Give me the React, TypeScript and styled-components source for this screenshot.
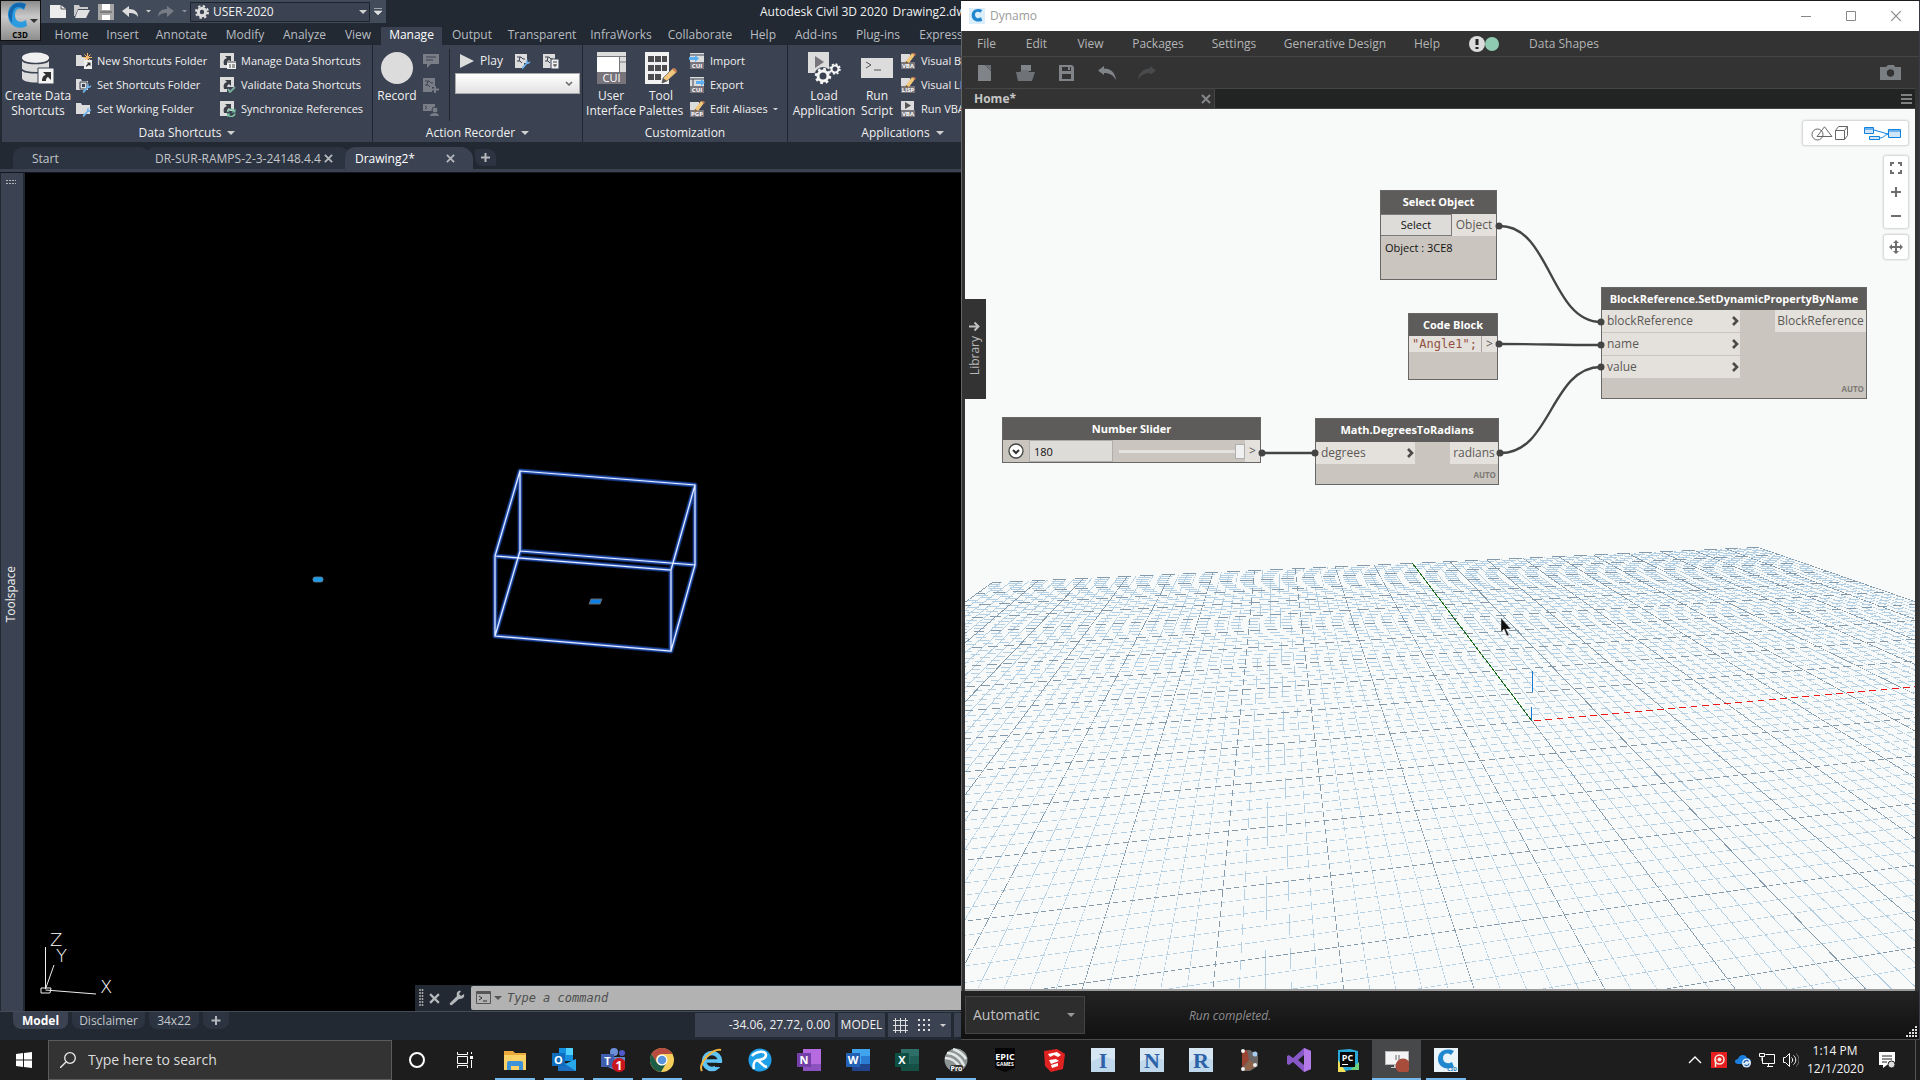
import React from 'react';
import styled, { createGlobalStyle, css } from 'styled-components';

const ui = '"Open Sans", "Noto Sans", sans-serif';
const mono = '"DejaVu Sans Mono", "Liberation Mono", monospace';
const c = {
  dark: '#222933',
  panel: '#3b4252',
  text: '#f0f0f0',
  dim: '#c3c6ca',
  icon: '#dcdcdc',
  dyn: '#333333',
  canvas: '#f8faf9',
};

const GlobalStyle = createGlobalStyle`
  * { box-sizing: border-box; }
  body { margin: 0; background: #1c1c1c; font-family: ${ui}; font-size: 12px; line-height: 16px; }
  button, input, select { font: inherit; color: inherit; margin: 0; padding: 0; border: 0; background: none; border-radius: 0; }
  svg { display: block; flex: none; }
`;

/* ---------- shell ---------- */
const Desktop = styled.div`
  min-height: 100vh;
  display: flex;
  flex-direction: column;
`;
const Windows = styled.main`
  flex: 1;
  display: grid;
  grid-template-columns: minmax(0, 961fr) minmax(0, 959fr);
`;

/* ---------- Civil 3D ---------- */
const Cad = styled.section`
  display: flex;
  flex-direction: column;
  overflow: hidden;
  background: ${c.dark};
  color: ${c.text};
  white-space: nowrap;
`;
const CadHeader = styled.header`
  display: flex;
  height: 45px;
`;
const AppButton = styled.button`
  flex: none;
  width: 41px;
  height: 41px;
  border: 1px solid #111;
  background: linear-gradient(#8b8b8b, #c9c9c9 40%, #8d8d8d);
`;
const HeaderRows = styled.div`
  flex: 1;
  min-width: 0;
  display: flex;
  flex-direction: column;
  justify-content: space-between;
`;
const TitleRow = styled.div`
  display: flex;
  align-items: flex-start;
`;
const QuickAccess = styled.div`
  display: flex;
  align-items: center;
  flex: none;
  width: 345px;
  height: 23px;
  padding-left: 9px;
  background: #414b5a;
`;
const QuickButton = styled.button<{ $w: number }>`
  display: flex;
  flex: none;
  align-items: center;
  width: ${(p) => p.$w}px;
  height: 20px;
`;
const WorkspacePicker = styled.label`
  display: flex;
  align-items: center;
  gap: 4px;
  width: 180px;
  height: 20px;
  padding: 0 2px 0 4px;
  border: 1px solid #1d232c;
  background: ${c.panel};
  select { flex: 1; appearance: none; outline: 0; }
`;
const WindowTitle = styled.h1`
  display: flex;
  gap: 5px;
  margin: 4px 0 0 374px;
  font-size: 12px;
  font-weight: 400;
  line-height: 16px;
`;
const RibbonTabs = styled.nav`
  display: flex;
  padding-left: 4px;
`;
const RibbonTab = styled.button<{ $w: number; $active?: boolean }>`
  flex: none;
  width: ${(p) => p.$w}px;
  height: 18px;
  padding-bottom: 2px;
  line-height: 16px;
  color: ${(p) => (p.$active ? '#fff' : '#b9bdc1')};
  background: ${(p) => (p.$active ? c.panel : 'none')};
`;
const Ribbon = styled.div`
  display: flex;
  height: 97px;
  margin-left: 2px;
  background: ${c.panel};
`;
const Panel = styled.section<{ $w: number }>`
  flex: none;
  width: ${(p) => p.$w}px;
  display: flex;
  flex-direction: column;
  justify-content: space-between;
  padding-bottom: 1px;
  border-right: 1px solid #202631;
`;
const PanelBody = styled.div<{ $pad?: number }>`
  display: flex;
  padding-left: ${(p) => p.$pad ?? 0}px;
`;
const PanelTitle = styled.h2`
  display: flex;
  align-items: center;
  justify-content: center;
  gap: 6px;
  margin: 0;
  font-size: 12px;
  font-weight: 400;
  line-height: 16px;
`;
const BigButton = styled.button<{ $w: number }>`
  flex: none;
  display: flex;
  flex-direction: column;
  align-items: center;
  gap: 3px;
  width: ${(p) => p.$w}px;
  padding-top: 7px;
  line-height: 15px;
`;
const Stack = styled.div<{ $w?: number; $gap?: number }>`
  flex: none;
  display: flex;
  flex-direction: column;
  margin-left: ${(p) => p.$gap ?? 0}px;
  padding-top: 4px;
  width: ${(p) => (p.$w ? `${p.$w}px` : 'auto')};
  font-size: 11px;
`;
const RowButton = styled.button`
  display: flex;
  align-items: center;
  gap: 5px;
  height: 24px;
`;
const RecorderTools = styled.div`
  display: flex;
  flex-direction: column;
  width: 132px;
  margin-top: 4px;
  padding-left: 5px;
  border-left: 1px solid #22262f;
`;
const RecorderRow = styled.div`
  display: flex;
  gap: 12px;
  height: 24px;
  padding-left: 4px;
`;
const MacroSelect = styled.label`
  display: flex;
  align-items: center;
  width: 125px;
  height: 21px;
  padding-right: 6px;
  border: 1px solid #a9a9a9;
  background: linear-gradient(#fff, #e2e2e2);
  select { flex: 1; min-width: 0; appearance: none; color: #333; outline: 0; }
`;
const DocTabs = styled.nav`
  display: flex;
  align-items: flex-end;
  height: 27px;
  padding-left: 13px;
`;
const DocTab = styled.div<{ $w: number; $pad: number; $active?: boolean }>`
  display: flex;
  align-items: center;
  justify-content: space-between;
  flex: none;
  width: ${(p) => p.$w}px;
  height: 22px;
  padding: 1px 18px 0 ${(p) => p.$pad}px;
  margin-right: -6px;
  border-radius: 10px 12px 0 0;
  color: ${(p) => (p.$active ? '#fff' : c.dim)};
  background: ${(p) => (p.$active ? c.panel : '#2c3441')};
  position: relative;
  z-index: ${(p) => (p.$active ? 1 : 0)};
`;
const NewTab = styled.button`
  display: grid;
  place-items: center;
  width: 21px;
  height: 17px;
  margin: 0 0 3px 8px;
  border-radius: 2px 8px 2px 8px;
  background: #2c3441;
`;
const Strip = styled.div`
  height: 4px;
  background: ${c.panel};
  border-bottom: 1px solid #14181e;
`;
const Workspace = styled.div`
  flex: 1;
  display: flex;
`;
const Palette = styled.aside`
  flex: none;
  display: flex;
  flex-direction: column;
  align-items: center;
  justify-content: space-between;
  width: 25px;
  padding: 6px 2px 8px 0;
  border-left: 1px solid ${c.dark};
  border-right: 2px solid ${c.dark};
  background: ${c.panel};
`;
const SideLabel = styled.span`
  writing-mode: vertical-rl;
  transform: rotate(180deg);
  line-height: 16px;
`;
const PaletteLabel = styled(SideLabel)`
  margin: auto 0;
`;
const ModelSpace = styled.div`
  position: relative;
  flex: 1;
  min-width: 0;
  display: flex;
  flex-direction: column;
  justify-content: flex-end;
  background: #000;
`;
const Drawing = styled.svg`
  position: absolute;
  inset: 0;
  width: 100%;
  height: 100%;
`;
const Ucs = styled.svg`
  position: absolute;
  left: 14px;
  bottom: 10px;
`;
const CommandLine = styled.form`
  position: relative;
  display: flex;
  align-items: stretch;
  height: 26px;
  margin-left: 390px;
  background: ${c.dark};
`;
const CommandTools = styled.div`
  flex: none;
  display: flex;
  align-items: center;
  gap: 4px;
  width: 56px;
  padding-left: 4px;
`;
const WrenchSlot = styled.span`
  margin-left: 5px;
`;
const CommandField = styled.label`
  flex: 1;
  display: flex;
  align-items: center;
  gap: 5px;
  margin: 1px 0;
  padding-left: 5px;
  border-radius: 2px 0 0 2px;
  background: #b1b2b1;
  input { flex: 1; min-width: 0; outline: 0; font: italic 12px/16px ${mono}; }
  input::placeholder { color: #4e4f4f; opacity: 1; }
`;
const CadFooter = styled.footer`
  display: flex;
  align-items: flex-start;
  height: 29px;
  border-top: 1px solid #454b57;
`;
const LayoutTabs = styled.nav`
  display: flex;
  flex: 1;
  padding-left: 13px;
`;
const LayoutTab = styled.button<{ $w: number; $active?: boolean }>`
  flex: none;
  width: ${(p) => p.$w}px;
  height: 17px;
  line-height: 16px;
  border-radius: 0 0 8px 8px;
  margin-right: 4px;
  font-weight: ${(p) => (p.$active ? 700 : 400)};
  color: ${(p) => (p.$active ? '#fff' : c.dim)};
  background: ${(p) => (p.$active ? c.panel : '#2c3441')};
`;
const StatusTools = styled.div`
  display: flex;
  gap: 3px;
  padding-top: 1px;
`;
const StatusBox = styled.button<{ $w: number; $end?: boolean }>`
  display: flex;
  align-items: center;
  justify-content: ${(p) => (p.$end ? 'flex-end' : 'center')};
  gap: 9px;
  flex: none;
  width: ${(p) => p.$w}px;
  height: 24px;
  padding-right: ${(p) => (p.$end ? 5 : 0)}px;
  background: ${c.panel};
`;

/* ---------- Dynamo ---------- */
const Dyn = styled.section`
  position: relative;
  display: flex;
  flex-direction: column;
  margin-top: 1px;
  border-right: 1px solid #3a3c44;
  background: ${c.dyn};
  box-shadow: inset 1px 0 #666;
  color: #b4b5b6;
  white-space: nowrap;
`;
const DynTitle = styled.header`
  display: flex;
  align-items: center;
  height: 30px;
  padding: 0 3px 0 8px;
  gap: 5px;
  background: #fff;
  color: #9b9b9b;
  h1 { flex: 1; margin: 0; font-size: 12px; font-weight: 400; line-height: 16px; }
`;
const WindowButton = styled.button`
  display: grid;
  place-items: center;
  width: 40px;
  height: 28px;
`;
const DynMenu = styled.nav`
  display: flex;
  align-items: center;
  height: 26px;
  padding-left: 1px;
  border-bottom: 1px solid #454545;
`;
const MenuItem = styled.button<{ $w: number }>`
  flex: none;
  width: ${(p) => p.$w}px;
  height: 24px;
`;
const Notice = styled.button`
  display: flex;
  flex: none;
  width: 60px;
  justify-content: center;
`;
const DynTools = styled.div`
  display: flex;
  align-items: center;
  height: 31px;
  padding: 0 18px 0 16px;
`;
const ToolButton = styled.button<{ $w: number }>`
  display: flex;
  width: ${(p) => p.$w}px;
`;
const Spacer = styled.div`
  flex: 1;
`;
const DynTabs = styled.nav`
  display: flex;
  height: 21px;
  margin: 0 4px;
  border-top: 1px solid #454545;
  border-bottom: 1px solid #454545;
  background: #222424;
`;
const DynTab = styled.div`
  display: flex;
  align-items: center;
  justify-content: space-between;
  width: 250px;
  padding: 0 3px 0 9px;
  border-right: 1px solid #454545;
  background: ${c.dyn};
  color: #c6c6c6;
  font-weight: 700;
`;
const MenuButton = styled.button`
  display: grid;
  place-items: center;
  width: 17px;
  margin-left: auto;
`;
const Graph = styled.div`
  position: relative;
  flex: 1;
  margin: 0 4px;
  background: ${c.canvas};
  border-bottom: 2px solid #9a9a9a;
  overflow: hidden;
`;
const GraphLayer = styled.svg`
  position: absolute;
  inset: 0;
  width: 100%;
  height: 100%;
`;
const LibraryTab = styled.button`
  position: absolute;
  left: 0;
  top: 190px;
  display: flex;
  flex-direction: column;
  align-items: center;
  gap: 4px;
  width: 21px;
  height: 100px;
  padding-top: 22px;
  padding-right: 2px;
  background: ${c.dyn};
  color: #b8b8b8;
`;
const ViewTools = styled.div`
  position: absolute;
  top: 12px;
  right: 7px;
  display: flex;
  flex-direction: column;
  align-items: flex-end;
`;
const ToolCard = styled.div<{ $row?: boolean; $gap: number }>`
  display: flex;
  flex-direction: ${(p) => (p.$row ? 'row' : 'column')};
  margin-bottom: ${(p) => p.$gap}px;
  border-radius: 2px;
  background: #fff;
  box-shadow: 0 0 2px 1px #cfd0d0;
`;
const ViewButton = styled.button<{ $w: number }>`
  display: grid;
  place-items: center;
  width: ${(p) => p.$w}px;
  height: 24px;
  & + & { box-shadow: ${(p) => (p.$w > 30 ? '-1px 0 0 #d4d5d5' : 'none')}; }
`;
const Node = styled.article<{ $x: number; $y: number; $w: number; $h: number }>`
  position: absolute;
  left: ${(p) => p.$x}px;
  top: ${(p) => p.$y}px;
  width: ${(p) => p.$w}px;
  height: ${(p) => p.$h}px;
  display: flex;
  flex-direction: column;
  border: 1px solid #696766;
  background: #cac5be;
  color: #5b5957;
`;
const NodeTitle = styled.h2<{ $h?: number }>`
  margin: 0;
  height: ${(p) => p.$h ?? 22}px;
  font-size: 11px;
  font-weight: 700;
  line-height: 22px;
  text-align: center;
  color: #fff;
  background: #5e5c5a;
`;
const NodeBody = styled.div`
  display: flex;
  justify-content: space-between;
  align-items: flex-start;
`;
const portBase = css`
  display: flex;
  align-items: center;
  justify-content: space-between;
  height: 22px;
  background: #e4e1dc;
`;
const Inputs = styled.div<{ $w: number }>`
  display: grid;
  gap: 1px;
  width: ${(p) => p.$w}px;
`;
const InPort = styled.div`
  ${portBase}
  padding: 0 1px 0 5px;
`;
const OutPort = styled.div<{ $w: number }>`
  ${portBase}
  justify-content: center;
  width: ${(p) => p.$w}px;
`;
const Lacing = styled.span`
  margin: auto 2px 2px auto;
  font-size: 8px;
  font-weight: 700;
  line-height: 14px;
  color: #7d7a76;
`;
const SelectButton = styled.button`
  flex: 1;
  height: 22px;
  border: 1px solid #7b797c;
  border-left: 0;
  background: #dddcd9;
  color: #111;
  font-size: 11px;
`;
const Selected = styled.p`
  margin: 4px;
  font-size: 11px;
  color: #111;
`;
const CodeInput = styled.input`
  flex: 1;
  min-width: 0;
  height: 16px;
  padding-left: 3px;
  border-right: 1px solid #aaa7a3;
  background: #e4e1dc;
  color: #92503f;
  font: 12px/16px ${mono};
  outline: 0;
`;
const CodePort = styled(OutPort)`
  height: 16px;
`;
const Expander = styled.button`
  width: 26px;
  display: flex;
  justify-content: center;
  align-self: center;
`;
const ValueInput = styled.input`
  width: 84px;
  height: 22px;
  padding-left: 4px;
  border: 1px solid #b0adaa;
  background: #dddcd9;
  color: #111;
  font-size: 11px;
  outline: 0;
`;
const Range = styled.input`
  flex: 1;
  min-width: 0;
  height: 22px;
  margin-left: 6px;
  appearance: none;
  outline: 0;
  &::-webkit-slider-runnable-track { height: 3px; background: #e4e2df; border: 0; }
  &::-webkit-slider-thumb { appearance: none; width: 10px; height: 15px; margin-top: -6px; border: 1px solid #b0b0b0; background: #f0f0f0; }
`;
const Cursor = styled.svg`
  position: absolute;
  left: 536px;
  top: 509px;
`;
const RunBar = styled.footer`
  display: flex;
  align-items: center;
  height: 49px;
  padding-left: 4px;
  border-bottom: 1px solid #4a4a4a;
  background: linear-gradient(#232323, #111);
`;
const RunMode = styled.label`
  display: flex;
  align-items: center;
  width: 120px;
  height: 38px;
  padding: 0 9px 0 7px;
  border: 1px solid #444;
  background: #2d2d2d;
  select { flex: 1; min-width: 0; appearance: none; outline: 0; font-size: 14px; color: #c0c0c0; }
`;
const RunStatus = styled.output`
  flex: 1;
  margin-left: 104px;
  padding-top: 2px;
  font-style: italic;
  color: #8d8d90;
`;
const Resize = styled.svg`
  align-self: flex-end;
  margin: 0 2px 2px 0;
`;

/* ---------- taskbar ---------- */
const Taskbar = styled.footer`
  display: flex;
  height: 40px;
  background: #1d1d1d;
  color: #f4f4f4;
`;
const StartButton = styled.button`
  display: grid;
  place-items: center;
  width: 48px;
`;
const Search = styled.label`
  display: flex;
  align-items: center;
  gap: 12px;
  width: 344px;
  padding-left: 11px;
  border: 1px solid #5c5c5c;
  background: #333;
  input { flex: 1; outline: 0; font-size: 14px; line-height: 20px; }
  input::placeholder { color: #dcdcdc; opacity: 1; }
`;
const Task = styled.button<{ $open?: boolean; $active?: boolean }>`
  display: grid;
  place-items: center;
  width: 49px;
  background: ${(p) =>
    p.$active
      ? 'linear-gradient(#76b9ed, #76b9ed) bottom / 100% 2px no-repeat, #47484a'
      : p.$open
        ? 'linear-gradient(#76b9ed, #76b9ed) bottom / 40px 2px no-repeat'
        : 'none'};
`;
const Tray = styled.div`
  display: flex;
  align-items: center;
  gap: 8px;
  margin-left: auto;
  padding-right: 20px;
  margin-right: 4px;
  border-right: 1px solid #555;
`;
const TrayButton = styled.button`
  display: flex;
`;
const Clock = styled.time`
  width: 56px;
  margin-right: 8px;
  text-align: center;
  line-height: 18px;
`;

/* ---------- small drawings ---------- */
const Down = ({ w = 8, fill = '#d0d0d0' }: { w?: number; fill?: string }) => (
  <svg width={w} height={w / 2} viewBox="0 0 8 4"><path d="M0 0h8L4 4z" fill={fill} /></svg>
);
const Cross = ({ s = 9, stroke = '#b5b8bb', w = 2 }: { s?: number; stroke?: string; w?: number }) => (
  <svg width={s} height={s} viewBox="0 0 10 10"><path d="M1 1l8 8M9 1L1 9" stroke={stroke} strokeWidth={w} fill="none" /></svg>
);
const Plus = () => (
  <svg width="9" height="9"><path d="M4.500 0v9M0 4.500h9" stroke="#b5b8bb" strokeWidth="2" /></svg>
);
const Chevron = () => (
  <svg width="7" height="10" viewBox="0 0 7 10"><path d="M1 1l4 4-4 4" stroke="#4c4a48" strokeWidth="2.600" fill="none" /></svg>
);
const S16 = ({ children }: { children: React.ReactNode }) => (
  <svg width="16" height="16" viewBox="0 0 16 16" fontFamily="Open Sans" fontWeight="700">{children}</svg>
);
const Wrench = ({ fill = '#6fb2ea' }: { fill?: string }) => (
  <path d="M7 14l4-4c-.6-1.800.6-3.600 2.400-3.600l-1.200 1.700 1.200 1.100 1.900-1.200c.2 2-1.500 3.400-3.200 2.900L8.300 15.600c-1 .9-2.200-.6-1.300-1.600z" fill={fill} />
);
const Folder = () => <path d="M0 2h5l1 2h6v9H0z" fill={c.icon} />;
const Shortcut = () => (
  <>
    <path d="M0 0h14v10H7v5H0z" fill={c.icon} />
    <path d="M4 12c-1-4 0-6 3-7L5 3h6v6L9 7c-2 1-2 3-2 5z" fill="#3b3f46" />
  </>
);
const Pencil = () => (
  <>
    <path d="M6 8l6-8 3 2-6 8-4 1z" fill="#f3c77b" />
    <path d="M12 0l1-1 3 2-1 2z" fill="#b87446" />
    <path d="M6 8l3 2-4 1z" fill="#6d5a45" />
  </>
);
const Tag = ({ label, w = 14 }: { label: string; w?: number }) => (
  <>
    <rect x="1" y="9" width={w} height="7" fill="#77747b" />
    <text x={1 + w / 2} y="15" fontSize="6" textAnchor="middle" fill="#fff">{label}</text>
  </>
);
const Scroll = ({ fill = c.icon }: { fill?: string }) => (
  <>
    <path d="M0 1h12v9H9v5H0z" fill={fill} />
    <path d="M2 4h4l2 2h2M2 8h3l2 2M5 4L4 8" stroke="#3b4252" fill="none" />
  </>
);
const icons = {
  newFolder: <S16><Folder /><path d="M11.500 0v9M7 4.500h9M8.500 1.500l6 6M14.500 1.500l-6 6" stroke="#f7b765" /><path d="M8 7h8v9H8z" fill="#eee" /><path d="M10 14c0-2 1-3 2-3l-1-1.500h3.500V13L13 12z" fill="#333" /></S16>,
  setShort: <S16><Folder /><path d="M4 5h7v7H4z" fill="none" stroke="#3b4252" /><path d="M6 7h3v3H6z" fill="#3b4252" /><Wrench /></S16>,
  setWork: <S16><path d="M0 2h5l1 2h8v9H0z" fill={c.icon} /><Wrench /></S16>,
  manage: <S16><Shortcut /><path d="M7 8h9v8H7z" fill="#f3f3f3" /><path d="M7 8h9v2H7z" fill="#9a9a9a" /><path d="M9 12h2m1 0h3M9 14h2m1 0h3" stroke="#444" /></S16>,
  validate: <S16><Shortcut /><path d="M8 12l2 3 5-5" stroke="#7bab9a" strokeWidth="2" fill="none" /></S16>,
  sync: <S16><Shortcut /><path d="M7.500 11a4 4 0 017-1M15 12.500a4 4 0 01-7 1.500" stroke="#7bc1a2" strokeWidth="1.500" fill="none" /><path d="M15.500 7.500v4h-4zM7 16v-3.500h3.500z" fill="#7bc1a2" /></S16>,
  comment: <S16><path d="M0 1h16v10H8l-4 4v-4H0z" fill="#797d86" /><path d="M3 4h10M3 7h7" stroke="#3b4252" /></S16>,
  addStep: <S16><Scroll fill="#797d86" /><path d="M12 9v7M8 12.500h8" stroke="#797d86" strokeWidth="2" /></S16>,
  user: <S16><path d="M0 3h12v7H0z" fill="#797d86" /><path d="M2 5l2 1.500L2 8" stroke="#3b4252" fill="none" /><circle cx="12" cy="9" r="3" fill="#797d86" stroke="#3b4252" /><path d="M7 15c0-4 9-4 9 0z" fill="#797d86" /></S16>,
  macroEdit: <S16><Scroll /><Wrench /></S16>,
  macroPlay: <S16><Scroll /><path d="M8 6h8v10H8z" fill="#f0f0f0" stroke="#3b4252" /><path d="M10 9h4M10 12h4M12 11v3" stroke="#444" /></S16>,
  cuiImport: <S16><path d="M1 0h14v9H1z" fill={c.icon} /><path d="M1 2h14" stroke="#3b4252" /><path d="M0 4h6V2l4 3.500L6 9V7H0z" fill="#58aef0" /><Tag label="CUI" /></S16>,
  cuiExport: <S16><path d="M1 0h14v9H1z" fill={c.icon} /><path d="M1 2h14M4 2v7" stroke="#3b4252" /><path d="M7 4h5V2l4 3.500L12 9V7H7z" fill="#58aef0" /><Tag label="CUI" /></S16>,
  alias: <S16><path d="M1 1h9v8H1z" fill={c.icon} /><Tag label="PGP" /><Pencil /></S16>,
  vba: <S16><path d="M1 1h9v8H1z" fill={c.icon} /><Tag label="VBA" /><Pencil /></S16>,
  lisp: <S16><path d="M1 1h9v8H1z" fill={c.icon} /><Tag label="LISP" /><Pencil /></S16>,
  runVba: <S16><path d="M1 0h13v9H1z" fill={c.icon} /><path d="M5 1l6 3.500L5 8z" fill="#555" /><Tag label="VBA" /></S16>,
  play: <svg width="16" height="16"><path d="M1 1l14 7-14 7z" fill={c.icon} /></svg>,
};
const Gear = ({ x, y, r }: { x: number; y: number; r: number }) => (
  <g transform={`translate(${x} ${y})`}>
    <circle r={r} fill="none" stroke="#f4f4f4" strokeWidth={r * 0.6} />
    <circle r={r * 1.4} fill="none" stroke="#f4f4f4" strokeWidth={r * 0.5} strokeDasharray={`${r * 0.55} ${r * 0.55}`} />
  </g>
);
const DatabaseIcon = () => (
  <svg width="36" height="33" viewBox="0 0 36 33">
    <path d="M2 6v20c0 6 27 6 27 0V6z" fill={c.icon} />
    <path d="M2 7c0 6 27 6 27 0M2 17c0 5 27 5 27 0" stroke="#3b4252" strokeWidth="1.500" fill="none" />
    <ellipse cx="15.500" cy="5.500" rx="13.500" ry="5" fill="#f0f0f0" />
    <path d="M18 16h16v16H18z" fill="#f4f4f4" stroke="#3b4252" />
    <path d="M22 29c0-4 2-6 4-6l-3-3h8v8l-3-3c-2 1-2 2-2 4z" fill="#333" />
  </svg>
);
const CuiIcon = () => (
  <svg width="29" height="33" viewBox="0 0 29 33">
    <path d="M0 0h29v32H0z" fill={c.icon} /><path d="M0 4.500h29M22.500 5v15M23 10h6" stroke="#77747b" />
    <path d="M0 5h22v15H0z" fill="#fff" /><path d="M0 20h29v12H0z" fill="#77747b" />
    <text x="14.500" y="30" fontSize="11" textAnchor="middle" fill="#fff" fontFamily="Open Sans">CUI</text>
  </svg>
);
const PaletteIcon = () => (
  <svg width="34" height="33" viewBox="0 0 34 33">
    <path d="M1 0h24v32H1z" fill="#f2f2f2" />
    {[4, 13, 22].map((y) => [4, 11].map((x) => <rect key={`${x}-${y}`} x={x} y={y} width="6" height="6" fill="#4c4c4e" />))}
    <rect x="18" y="4" width="5" height="6" fill="#4c4c4e" /><rect x="18" y="13" width="5" height="6" fill="#4c4c4e" />
    <path d="M19 26L29 16l4 4-10 9-5 2z" fill="#f3c77b" stroke="#3b4252" strokeWidth=".6" /><path d="M28 17l3-1 2 3-1 2z" fill="#c98257" /><path d="M19 26l4 3-5 2z" fill="#555" />
  </svg>
);
const LoadIcon = () => (
  <svg width="34" height="33" viewBox="0 0 34 33">
    <path d="M1 0h21v21H1z" fill={c.icon} /><path d="M8 4l9 6-9 6z" fill="#77747b" />
    <circle cx="16" cy="24" r="9" fill="#3b4252" /><Gear x={16} y={24} r={5} /><Gear x={28} y={17} r={3.5} />
  </svg>
);
const ScriptIcon = () => (
  <svg width="32" height="33"><path d="M0 6h32v20H0z" fill={c.icon} /><path d="M5 10l5 3-5 3M13 18h7" stroke="#555" fill="none" /></svg>
);

/* ---------- scenes ---------- */
const boxEdges = 'M495 298L670 312 646 397 470 383zM495 378L670 392 646 478 470 463zM495 298V378M670 312V392M646 397V478M470 383V463';

function ModelDrawing() {
  return (
    <Drawing aria-label="Selected block">
      <path d={boxEdges} fill="none" stroke="#12306f" strokeWidth="5" strokeLinejoin="round" />
      <path d={boxEdges} fill="none" stroke="#2a55b8" strokeWidth="3" strokeLinejoin="round" />
      <path d={boxEdges} fill="none" stroke="#e6efff" strokeWidth="1.200" />
      <rect x="288" y="404" width="10" height="5" rx="2" fill="#1e9be6" stroke="#5a7f95" strokeWidth=".8" />
      <path d="M566 426h11l-2 5h-11z" fill="#0f7fe6" stroke="#666" />
    </Drawing>
  );
}
function UcsIcon() {
  return (
    <Ucs width="80" height="72" viewBox="0 0 80 72" fontFamily="DejaVu Sans" fontWeight="200" fontSize="18" fill="#fff">
      <path d="M6.500 60V18M6.500 61L57 65M6.500 60L15 36M2 59h10l-1 5H2z" stroke="#eee" fill="none" />
      <text x="11" y="17">Z</text><text x="17" y="33">Y</text><text x="61" y="64">X</text>
    </Ucs>
  );
}

/* Perspective ground plane: the origin plus the vanishing points of both axes. */
const O = [567, 612], VY = [308.5, 271], VX = [4333, 275];
const KY = 0.01722, KX = 0.003632, HALF = 50, NEAR = 0.06;
type Line = [number[], number[]];
const project = (s: number, t: number) => {
  const a = s * KX, b = t * KY, w = 1 + a + b;
  return [(O[0] + a * VX[0] + b * VY[0]) / w, (O[1] + a * VX[1] + b * VY[1]) / w];
};
const alongY = (s: number): Line => [project(s, Math.max(-HALF, (NEAR - 1 - s * KX) / KY)), project(s, HALF)];
const alongX = (t: number): Line => [project(Math.max(-HALF, (NEAR - 1 - t * KY) / KX), t), project(HALF, t)];
const steps = Array.from({ length: HALF * 2 + 1 }, (_, i) => i - HALF);
const light = '#b5d0e2', heavy = '#8499a9';

/* A hairline shows only where it runs near the middle of a pixel row or column. */
const COVER = 0.6;
const Hairline = ({ line: [p, q], stroke }: { line: Line; stroke: string }) => {
  const dx = q[0] - p[0], dy = q[1] - p[1];
  const flat = Math.abs(dx) > Math.abs(dy);
  const across = flat ? dy : dx;
  const period = Math.min(4000, Math.hypot(dx, dy) / Math.max(Math.abs(across), 0.001));
  const from = (flat ? p[1] : p[0]) * Math.sign(across || 1);
  const lead = ((((1 - COVER) / 2 - from) % 1) + 1) % 1;
  return (
    <path
      d={`M${p[0].toFixed(2)} ${p[1].toFixed(2)}L${q[0].toFixed(2)} ${q[1].toFixed(2)}`}
      stroke={stroke}
      strokeDasharray={`${period * COVER} ${period * (1 - COVER)}`}
      strokeDashoffset={(1 - lead) * period}
    />
  );
};

function GroundGrid() {
  const order = [...steps.filter((n) => n % 5), ...steps.filter((n) => n % 5 === 0)];
  return (
    <GraphLayer shapeRendering="crispEdges" fill="none" aria-hidden="true">
      {order.map((n) => (
        <g key={n}>
          <Hairline line={alongY(n)} stroke={n % 5 ? light : heavy} />
          <Hairline line={alongX(n)} stroke={n % 5 ? light : heavy} />
        </g>
      ))}
      <path d={`M${project(0, 0)}L${project(0, HALF)}`} stroke={c.canvas} />
      <path d={`M${project(0, 0)}L${project(HALF, 0)}`} stroke={c.canvas} />
      <path d={`M${project(0, 0)}L${project(0, HALF)}`} stroke="#1d6b1d" />
      <Hairline line={[project(0, 0), project(HALF, 0)]} stroke="#f01818" />
      <path d="M566.500 598v13" stroke="#1478d4" />
      <path d="M567.500 562v21" stroke="#1478d4" />
    </GraphLayer>
  );
}
const wires = [[535, 117, 636, 213], [535, 235, 636, 236], [536, 344, 636, 258], [298, 344, 350, 344]];
function Wires() {
  return (
    <GraphLayer aria-hidden="true">
      {wires.map(([x1, y1, x2, y2]) => {
        const m = (x1 + x2) / 2;
        return (
          <g key={y1 + x1} fill="#444" stroke="none">
            <path d={`M${x1} ${y1}C${m} ${y1} ${m} ${y2} ${x2} ${y2}`} stroke="#444" strokeWidth="2.400" fill="none" />
            <circle cx={x1 - 1} cy={y1} r="3.500" /><circle cx={x2} cy={y2} r="3.500" />
          </g>
        );
      })}
    </GraphLayer>
  );
}

/* ---------- taskbar icons ---------- */
const T24 = ({ children }: { children: React.ReactNode }) => (
  <svg width="24" height="24" viewBox="0 0 24 24" fontFamily="Open Sans" fontWeight="700" textAnchor="middle">{children}</svg>
);
const Office = ({ a, b, d, tile, letter }: { a: string; b: string; d: string; tile: string; letter: string }) => (
  <T24><path d="M6 1h18v22H6z" fill={a} /><path d="M15 8h9v8h-9z" fill={b} /><path d="M6 16h18v7H6z" fill={d} /><rect y="5" width="14" height="14" fill={tile} /><text x="7" y="16" fontSize="11" fill="#fff">{letter}</text></T24>
);
const Autodesk = ({ letter }: { letter: string }) => (
  <T24><rect width="24" height="24" fill="#d6e6f3" /><path d="M0 14l12-6 12 4v12H0z" fill="#c0d8ec" /><text x="12" y="20" fontSize="22" fontFamily="Liberation Serif" fill="#2b62a8">{letter}</text></T24>
);
const CivilC = () => (
  <path d="M20 3C11-1 4 4 4 11s7 12 16 8l-2-5c-5 3-9 0-9-4s4-6 8-3z" fill="#2188cf" />
);
const tasks: { name: string; open?: boolean; active?: boolean; icon: React.ReactNode }[] = [
  { name: 'Cortana', icon: <svg width="18" height="18"><circle cx="9" cy="9" r="7" fill="none" stroke="#fff" strokeWidth="2" /></svg> },
  { name: 'Task view', icon: <svg width="18" height="16" fill="none" stroke="#fff"><path d="M.5 4.500h10v7H.5zM.5 0v2.500h10V0M.5 16v-2.500h10V16M14.500 0v2M14.500 8v8" /><path d="M14.500 4v3" strokeWidth="3" /></svg> },
  { name: 'File Explorer', open: true, icon: <T24><path d="M1 3h9l2 2h11v16H1z" fill="#e9a93b" /><path d="M1 7h22v15H1z" fill="#fbd267" /><path d="M4 22v-7q0-2 2-2h12q2 0 2 2v7h-4v-4H8v4z" fill="#3e92d8" /></T24> },
  { name: 'Outlook', open: true, icon: <T24><path d="M7 0h14v13H7z" fill="#1490df" /><path d="M14 0h7v7h-7z" fill="#50d0ff" /><path d="M6 11l9 5 9-5v12H6z" fill="#1b6fc2" /><path d="M24 11v12L13 16z" fill="#28a8ea" /><rect y="5" width="13" height="13" fill="#0f6cbd" /><text x="6.500" y="15.500" fontSize="11" fill="#fff">O</text></T24> },
  { name: 'Teams', open: true, icon: <T24><circle cx="13" cy="4" r="4" fill="#6d8fd8" /><circle cx="21" cy="5" r="3" fill="#5059c9" /><path d="M7 9h17v8l-8 6-9-4z" fill="#5f88cc" /><rect y="6" width="13" height="13" fill="#3f5fae" /><text x="6.500" y="16.500" fontSize="11" fill="#fff">T</text><circle cx="18" cy="17" r="7" fill="#c9161d" /><text x="18" y="21.500" fontSize="12" fill="#fff">1</text></T24> },
  { name: 'Chrome', open: true, icon: <T24><circle cx="12" cy="12" r="12" fill="#f6ce5b" /><path d="M1.600 6a12 12 0 0120.800 0H12a6 6 0 00-5.500 8.500z" fill="#b84c41" /><path d="M1.600 6A12 12 0 0011 24l5-8.500a6 6 0 01-9-.5z" fill="#1d5c47" /><circle cx="12" cy="12" r="5.500" fill="#fff" /><circle cx="12" cy="12" r="4.300" fill="#5b93dd" /></T24> },
  { name: 'Internet Explorer', icon: <T24><circle cx="13" cy="13" r="8" fill="none" stroke="#5fc3f5" strokeWidth="4.500" /><path d="M6 13h15" stroke="#5fc3f5" strokeWidth="3.500" /><path d="M16 15h9v4h-9z" fill="#1d1d1d" /><path d="M3 23C-2 16 14-1 22 2" stroke="#f2b53c" strokeWidth="2" fill="none" /></T24> },
  { name: 'Revu', icon: <T24><circle cx="12" cy="12" r="11.500" fill="#1e9fe8" /><path d="M4 8c4-5 14-6 14-1 0 4-6 5-9 5 4 2 5 6 10 7M9 12c-3 1-4 5-3 9" stroke="#fff" strokeWidth="2.600" fill="none" /></T24> },
  { name: 'OneNote', icon: <Office a="#b76be0" b="#b76be0" d="#8c52c0" tile="#7440a8" letter="N" /> },
  { name: 'Word', icon: <Office a="#41a5ee" b="#2b7cd3" d="#20458c" tile="#2460b4" letter="W" /> },
  { name: 'Excel', icon: <Office a="#2f6f6a" b="#1f5f55" d="#165045" tile="#0f4f43" letter="X" /> },
  { name: 'Earth Pro', open: true, icon: <T24><circle cx="12" cy="12" r="11.500" fill="#8d9494" /><path d="M3 5c7 0 14 5 17 13M1 10c7 0 12 4 15 10M9 1c6 2 10 5 13 10" stroke="#e6e8e8" strokeWidth="2.500" fill="none" /><rect x="6" y="17" width="13" height="7" rx="2" fill="#333" /><text x="12.500" y="23" fontSize="7" fill="#fff">Pro</text></T24> },
  { name: 'Epic Games', icon: <T24><path d="M2 0h20v20l-10 4-10-4z" fill="#050505" /><text x="12" y="12" fontSize="9" fill="#fff">EPIC</text><text x="12" y="18" fontSize="5" fill="#fff">GAMES</text></T24> },
  { name: 'SketchUp', icon: <T24><path d="M2 3l13-2 8 5-2 15-12 3-6-6z" fill="#e02320" /><path d="M6 6l9-2 4 3-3 2-4-2-4 2zM7 12l7-1 3 2-8 3M9 17l7-2v3l-6 2z" fill="#fff" /></T24> },
  { name: 'InfraWorks', icon: <Autodesk letter="I" /> },
  { name: 'Navisworks', icon: <Autodesk letter="N" /> },
  { name: 'Revit', icon: <Autodesk letter="R" /> },
  { name: 'Dynamo', icon: <T24><path d="M4 2h8l8 6v10l-8 5H4z" fill="#6b6664" /><path d="M4 2h5l2 10-7 8z" fill="#9a4434" /><path d="M4 22l8-10 6 6-6 4z" fill="#90634b" /><g fill="#eee"><circle cx="5" cy="3" r="2" /><circle cx="17" cy="6" r="2.500" fill="#a9cbee" /><circle cx="5" cy="21" r="2" /><circle cx="17" cy="17" r="2" /></g></T24> },
  { name: 'Visual Studio', icon: <T24><path d="M17 0l7 3v18l-7 3-11-10-4 3-2-1V8l2-1 4 3zM17 7l-6 5 6 5z" fill="#8657c5" fillRule="evenodd" /><path d="M17 0l7 3v18l-7 3z" fill="#b47ae8" /></T24> },
  { name: 'PyCharm', icon: <T24><path d="M2 2l12-1 8 2v18l-14 2-6-5z" fill="#2aa9d8" /><path d="M2 12l8 12H2z" fill="#f0e05a" /><path d="M14 22l9-8v8z" fill="#6fd37f" /><rect x="4" y="4" width="15" height="15" fill="#080808" /><text x="11.500" y="13" fontSize="9" fill="#fff">PC</text><path d="M6 16.500h6" stroke="#fff" /></T24> },
  { name: 'Recorder', active: true, icon: <T24><path d="M0 3h24v14H0z" fill="#b8b8b8" /><path d="M1 4h22v12H1z" fill="#f4f4f4" /><path d="M9 17h4v3H6v-1h3z" fill="#ccc" /><path d="M11 7v5M14 7v5" stroke="#666" /><circle cx="18" cy="18" r="7.500" fill="#a84c3c" /></T24> },
  { name: 'Civil 3D', open: true, icon: <T24><rect width="24" height="24" fill="#e9f4fb" /><CivilC /><text x="18" y="23" fontSize="5" fill="#2178b8">C3D</text></T24> },
];

const ribbonTabs: [string, number][] = [
  ['Home', 53], ['Insert', 49], ['Annotate', 69], ['Modify', 58], ['Analyze', 61], ['View', 46], ['Manage', 61], ['Output', 60],
  ['Transparent', 80], ['InfraWorks', 78], ['Collaborate', 80], ['Help', 46], ['Add-ins', 60], ['Plug-ins', 64], ['Express', 62],
];
const menus: [string, number][] = [
  ['File', 49], ['Edit', 51], ['View', 57], ['Packages', 78], ['Settings', 74], ['Generative Design', 128], ['Help', 56],
];

function CivilWindow() {
  return (
    <Cad>
      <CadHeader>
        <AppButton aria-label="Application menu">
          <svg width="39" height="39" viewBox="0 0 39 39">
            <path d="M25 3C13-2 6 6 7 15s9 15 19 10l-1-6c-6 4-11 1-11-5s4-8 9-5z" fill="#2c9be0" />
            <path d="M25 3C19 1 14 1 11 5c-5 6-4 12 0 17 0-7 0-12 3-15 3-2 6-1 9 1z" fill="#1567ae" />
            <path d="M29 18h8l-4 4z" fill="#333" />
            <text x="19" y="37" fontSize="8" fontWeight="700" textAnchor="middle" fontFamily="Open Sans">C3D</text>
          </svg>
        </AppButton>
        <HeaderRows>
          <TitleRow>
            <QuickAccess>
              <QuickButton $w={24} aria-label="New"><svg width="16" height="13"><path d="M0 0h11l5 4v9H0z" fill="#ececec" /><path d="M11 0v4h5" stroke="#555" fill="none" /></svg></QuickButton>
              <QuickButton $w={24} aria-label="Open"><svg width="16" height="13"><path d="M0 0h5l1 2h8v2H4L1 11H0z" fill="#ccc" /><path d="M4 5h12l-4 8H1z" fill="#e2e2e2" /></svg></QuickButton>
              <QuickButton $w={24} aria-label="Save"><svg width="16" height="16"><path d="M0 0h16v16H0z" fill="#a5a5a5" /><path d="M4 0h8v6H4zM4 11h8v5H4z" fill="#fff" /><path d="M2 8h12" stroke="#555" /></svg></QuickButton>
              <QuickButton $w={24} aria-label="Undo"><svg width="17" height="12"><path d="M7 0v3c6 0 9 3 9 8-2-3-4-4-9-4v4L0 5z" fill="#ddd" /></svg></QuickButton>
              <QuickButton $w={12} aria-label="Undo list"><Down w={5} /></QuickButton>
              <QuickButton $w={24} aria-label="Redo"><svg width="17" height="12"><path d="M9 0v3c-6 0-9 3-9 8 2-3 4-4 9-4v4l7-6z" fill="#777b84" /></svg></QuickButton>
              <QuickButton $w={8} aria-label="Redo list"><Down w={5} fill="#8d9098" /></QuickButton>
              <WorkspacePicker>
                <svg width="14" height="14" viewBox="-7 -7 14 14"><circle r="3.700" fill="none" stroke="#ddd" strokeWidth="3" /><circle r="6" fill="none" stroke="#ddd" strokeWidth="2" strokeDasharray="2.400 2.310" /></svg>
                <select aria-label="Workspace"><option>USER-2020</option></select>
                <Down />
              </WorkspacePicker>
              <QuickButton $w={16} aria-label="Customize"><svg width="16" height="8"><path d="M4 .5h8M4 3h8l-4 4z" stroke="#ddd" fill="#ddd" strokeWidth=".6" /></svg></QuickButton>
            </QuickAccess>
            <WindowTitle><span>Autodesk Civil 3D 2020</span><span>Drawing2.dwg</span></WindowTitle>
          </TitleRow>
          <RibbonTabs>
            {ribbonTabs.map(([t, w]) => <RibbonTab key={t} $w={w} $active={t === 'Manage'}>{t}</RibbonTab>)}
          </RibbonTabs>
        </HeaderRows>
      </CadHeader>
      <Ribbon>
        <Panel $w={371}>
          <PanelBody>
            <BigButton $w={72}><DatabaseIcon />Create Data<br />Shortcuts</BigButton>
            <Stack $w={144} $gap={2}>
              <RowButton>{icons.newFolder}New Shortcuts Folder</RowButton>
              <RowButton>{icons.setShort}Set Shortcuts Folder</RowButton>
              <RowButton>{icons.setWork}Set Working Folder</RowButton>
            </Stack>
            <Stack>
              <RowButton>{icons.manage}Manage Data Shortcuts</RowButton>
              <RowButton>{icons.validate}Validate Data Shortcuts</RowButton>
              <RowButton>{icons.sync}Synchronize References</RowButton>
            </Stack>
          </PanelBody>
          <PanelTitle>Data Shortcuts <Down /></PanelTitle>
        </Panel>
        <Panel $w={210}>
          <PanelBody>
            <BigButton $w={48}><svg width="32" height="33"><circle cx="16" cy="16" r="16" fill={c.icon} /></svg>Record</BigButton>
            <Stack $w={26} $gap={2}>
              <RowButton aria-label="Insert message">{icons.comment}</RowButton>
              <RowButton aria-label="Insert base point">{icons.addStep}</RowButton>
              <RowButton aria-label="Pause for user input">{icons.user}</RowButton>
            </Stack>
            <RecorderTools>
              <RecorderRow>
                <RowButton>{icons.play}Play</RowButton>
                <RowButton aria-label="Manage macros">{icons.macroEdit}</RowButton>
                <RowButton aria-label="Preference">{icons.macroPlay}</RowButton>
              </RecorderRow>
              <MacroSelect>
                <select aria-label="Macro"><option></option></select>
                <svg width="8" height="6"><path d="M1 1l3 3 3-3" stroke="#666" strokeWidth="1.500" fill="none" /></svg>
              </MacroSelect>
            </RecorderTools>
          </PanelBody>
          <PanelTitle>Action Recorder <Down /></PanelTitle>
        </Panel>
        <Panel $w={205}>
          <PanelBody $pad={2}>
            <BigButton $w={52}><CuiIcon />User<br />Interface</BigButton>
            <BigButton $w={48}><PaletteIcon />Tool<br />Palettes</BigButton>
            <Stack $gap={4}>
              <RowButton>{icons.cuiImport}Import</RowButton>
              <RowButton>{icons.cuiExport}Export</RowButton>
              <RowButton>{icons.alias}Edit Aliases <Down w={5} /></RowButton>
            </Stack>
          </PanelBody>
          <PanelTitle>Customization</PanelTitle>
        </Panel>
        <Panel $w={230}>
          <PanelBody $pad={2}>
            <BigButton $w={68}><LoadIcon />Load<br />Application</BigButton>
            <BigButton $w={38}><ScriptIcon />Run<br />Script</BigButton>
            <Stack $gap={4}>
              <RowButton>{icons.vba}Visual Basic Editor</RowButton>
              <RowButton>{icons.lisp}Visual LISP Editor</RowButton>
              <RowButton>{icons.runVba}Run VBA Macro</RowButton>
            </Stack>
          </PanelBody>
          <PanelTitle>Applications <Down /></PanelTitle>
        </Panel>
      </Ribbon>
      <DocTabs>
        <DocTab $w={138} $pad={19}>Start</DocTab>
        <DocTab $w={206} $pad={10}>DR-SUR-RAMPS-2-3-24148.4.4 <Cross /></DocTab>
        <DocTab $w={128} $pad={10} $active>Drawing2* <Cross /></DocTab>
        <NewTab aria-label="New drawing"><Plus /></NewTab>
      </DocTabs>
      <Strip />
      <Workspace>
        <Palette>
          <svg width="12" height="6"><path d="M1 1.500h10M1 4.500h10" stroke="#b5b8bb" strokeDasharray="2 1" /></svg>
          <PaletteLabel>Toolspace</PaletteLabel>
        </Palette>
        <ModelSpace>
          <ModelDrawing />
          <UcsIcon />
          <CommandLine>
            <CommandTools>
              <svg width="6" height="18"><path d="M1 0v18M3.500 0v18" stroke="#aaa" strokeWidth="1.500" strokeDasharray="2 1" /></svg>
              <Cross s={11} />
              <WrenchSlot><svg width="16" height="16"><path d="M1 13l7-7C7 3 9 0 12 1l-2 3 2 2 3-2c1 4-2 5-5 5l-7 6c-1 1-3-1-2-2z" fill="#b5b8bb" /></svg></WrenchSlot>
            </CommandTools>
            <CommandField>
              <svg width="26" height="14"><path d="M.5 .5h14v12H.5z" fill="none" stroke="#555" /><path d="M1 2h14" stroke="#555" strokeWidth="2" /><path d="M3 5l3 2-3 2M7 10h4" stroke="#333" fill="none" /><path d="M18 5h8l-4 4z" fill="#555" /></svg>
              <input aria-label="Command" placeholder="Type a command" />
            </CommandField>
          </CommandLine>
        </ModelSpace>
      </Workspace>
      <CadFooter>
        <LayoutTabs>
          <LayoutTab $w={55} $active>Model</LayoutTab>
          <LayoutTab $w={73}>Disclaimer</LayoutTab>
          <LayoutTab $w={50}>34x22</LayoutTab>
          <LayoutTab $w={26} aria-label="New layout"><svg width="26" height="9"><path d="M13 0v9M8.500 4.500h9" stroke="#b5b8bb" strokeWidth="2" /></svg></LayoutTab>
        </LayoutTabs>
        <StatusTools>
          <StatusBox $w={140} $end>-34.06, 27.72, 0.00</StatusBox>
          <StatusBox $w={47}>MODEL</StatusBox>
          <StatusBox $w={63} aria-label="Grid and snap">
            <svg width="15" height="15"><path d="M2.500 0v15M7.500 0v15M12.500 0v15M0 2.500h15M0 7.500h15M0 12.500h15" stroke="#ddd" /></svg>
            <svg width="14" height="14"><path d="M1 2h13M1 7h13M1 12h13" stroke="#ddd" strokeWidth="2" strokeDasharray="2 3" /></svg>
            <Down w={6} />
          </StatusBox>
          <StatusBox $w={7} aria-label="More" />
        </StatusTools>
      </CadFooter>
    </Cad>
  );
}

function DynamoWindow() {
  return (
    <Dyn>
      <DynTitle>
        <svg width="16" height="16" viewBox="0 0 24 24"><rect width="24" height="24" fill="#dceefa" /><CivilC /></svg>
        <h1>Dynamo</h1>
        <WindowButton aria-label="Minimize"><svg width="10" height="10"><path d="M0 5.500h10" stroke="#888" /></svg></WindowButton>
        <WindowButton aria-label="Maximize"><svg width="10" height="10"><path d="M.5 .5h9v9h-9z" stroke="#888" fill="none" /></svg></WindowButton>
        <WindowButton aria-label="Close"><Cross s={12} w={1} stroke="#888" /></WindowButton>
      </DynTitle>
      <DynMenu>
        {menus.map(([t, w]) => <MenuItem key={t} $w={w}>{t}</MenuItem>)}
        <Notice aria-label="Notifications">
          <svg width="32" height="16"><circle cx="23" cy="8" r="7" fill="#8fcbb1" /><circle cx="8" cy="8" r="8" fill="#dcdcdc" /><path d="M8 3v6M8 11v2" stroke="#222" strokeWidth="3" /></svg>
        </Notice>
        <MenuItem $w={98}>Data Shapes</MenuItem>
      </DynMenu>
      <DynTools>
        <ToolButton $w={39} aria-label="New"><svg width="16" height="16"><path d="M1 0h7l6 6v10H1z" fill="#808488" /><path d="M8 0l6 0 0 6z" fill="#6a6e72" /></svg></ToolButton>
        <ToolButton $w={43} aria-label="Open"><svg width="19" height="16"><path d="M5 0h10v6H5z" fill="#808488" /><path d="M0 7h4l2-2h6l1 2h6l-3 9H2z" fill="#6f7377" /></svg></ToolButton>
        <ToolButton $w={39} aria-label="Save"><svg width="15" height="16"><path d="M0 0h13l2 2v14H0z" fill="#808488" /><path d="M3 2h9v4H3zM3 9h9v5H3z" fill="#333" /><path d="M9 2h2v3H9z" fill="#808488" /></svg></ToolButton>
        <ToolButton $w={40} aria-label="Undo"><svg width="18" height="14"><path d="M6 0v2.500c7 0 11 4 12 11.500-3-5-6-7-12-7V9L0 4.500z" fill="#808488" /></svg></ToolButton>
        <ToolButton $w={18} aria-label="Redo"><svg width="18" height="14"><path d="M12 0v2.500C5 2.500 1 6.500 0 14c3-5 6-7 12-7V9l6-4.500z" fill="#484a4c" /></svg></ToolButton>
        <Spacer />
        <ToolButton $w={21} aria-label="Export image"><svg width="21" height="15"><path d="M0 2h6l2-2h6l1 2h6v13H0z" fill="#7a7f83" /><circle cx="10.500" cy="8" r="3.700" fill="#333" /></svg></ToolButton>
      </DynTools>
      <DynTabs>
        <DynTab>Home* <Cross s={10} stroke="#85888b" /></DynTab>
        <MenuButton aria-label="Tabs menu"><svg width="11" height="10"><path d="M0 1h11M0 5h11M0 9h11" stroke="#808080" strokeWidth="2" /></svg></MenuButton>
      </DynTabs>
      <Graph>
        <GroundGrid />
        <Node $x={415} $y={81} $w={117} $h={90}>
          <NodeTitle $h={23}>Select Object</NodeTitle>
          <NodeBody><SelectButton>Select</SelectButton><OutPort $w={44}>Object</OutPort></NodeBody>
          <Selected>Object : 3CE8</Selected>
        </Node>
        <Node $x={443} $y={204} $w={90} $h={67}>
          <NodeTitle>Code Block</NodeTitle>
          <NodeBody><CodeInput aria-label="Code" defaultValue={'"Angle1";'} /><CodePort $w={15}>&gt;</CodePort></NodeBody>
        </Node>
        <Node $x={636} $y={178} $w={266} $h={112}>
          <NodeTitle>BlockReference.SetDynamicPropertyByName</NodeTitle>
          <NodeBody>
            <Inputs $w={138}>
              {['blockReference', 'name', 'value'].map((n) => <InPort key={n}>{n}<Chevron /></InPort>)}
            </Inputs>
            <OutPort $w={91}>BlockReference</OutPort>
          </NodeBody>
          <Lacing>AUTO</Lacing>
        </Node>
        <Node $x={37} $y={308} $w={259} $h={46}>
          <NodeTitle>Number Slider</NodeTitle>
          <NodeBody>
            <Expander aria-label="Slider settings"><svg width="16" height="16"><circle cx="8" cy="8" r="7" fill="#fff" stroke="#444" strokeWidth="1.300" /><path d="M5 7l3 3 3-3" stroke="#333" strokeWidth="2" fill="none" /></svg></Expander>
            <ValueInput aria-label="Value" defaultValue="180" />
            <Range type="range" aria-label="Number" min="0" max="180" defaultValue="180" />
            <OutPort $w={15}>&gt;</OutPort>
          </NodeBody>
        </Node>
        <Node $x={350} $y={309} $w={184} $h={67}>
          <NodeTitle $h={23}>Math.DegreesToRadians</NodeTitle>
          <NodeBody>
            <Inputs $w={99}><InPort>degrees<Chevron /></InPort></Inputs>
            <OutPort $w={48}>radians</OutPort>
          </NodeBody>
          <Lacing>AUTO</Lacing>
        </Node>
        <Wires />
        <LibraryTab>
          <svg width="11" height="11"><path d="M0 5.500h9M5.500 1.500l4 4-4 4" stroke="#c0c0c0" strokeWidth="2" fill="none" /></svg>
          <SideLabel>Library</SideLabel>
        </LibraryTab>
        <ViewTools>
          <ToolCard $row $gap={11}>
            <ViewButton $w={53} aria-label="Geometry view"><svg width="37" height="15" fill="none" stroke="#666"><circle cx="6.500" cy="8.500" r="5.500" /><path d="M6 10.500L13.500 .8l7.500 9.700zM24.500 4.500h9v9h-9zM24.500 4.500l3-4h9v9l-3 4M33.500 4.500l3-4" /></svg></ViewButton>
            <ViewButton $w={52} aria-label="Graph view"><svg width="38" height="15" fill="#cfe4f7" stroke="#0f82e0"><path d="M11 4l14 4M17 12c4 0 4-3 8-4" fill="none" /><path d="M1.500 1.500h9v6h-9zM6.500 10.500h10v3h-10zM25.500 3.500h12v8h-12z" /><path d="M1 3h10M25 5h13" /></svg></ViewButton>
          </ToolCard>
          <ToolCard $gap={7}>
            <ViewButton $w={24} aria-label="Fit"><svg width="12" height="12"><path d="M1 4V1h3M8 1h3v3M11 8v3H8M4 11H1V8" stroke="#6d6f71" strokeWidth="2" fill="none" /></svg></ViewButton>
            <ViewButton $w={24} aria-label="Zoom in"><svg width="10" height="10"><path d="M5 0v10M0 5h10" stroke="#6d6f71" strokeWidth="2" /></svg></ViewButton>
            <ViewButton $w={24} aria-label="Zoom out"><svg width="10" height="10"><path d="M0 5h10" stroke="#6d6f71" strokeWidth="2" /></svg></ViewButton>
          </ToolCard>
          <ToolCard $gap={0}>
            <ViewButton $w={24} aria-label="Pan"><svg width="14" height="14"><path d="M7 1v12M1 7h12" stroke="#6d6f71" strokeWidth="2" /><path d="M7 0l3 3H4zM7 14l3-3H4zM0 7l3-3v6zM14 7l-3-3v6z" fill="#6d6f71" /></svg></ViewButton>
          </ToolCard>
        </ViewTools>
        <Cursor width="12" height="20"><path d="M0 0v14l3-3 3 7 2-1-3-6h5z" fill="#111" stroke="#ccc" strokeWidth=".5" /></Cursor>
      </Graph>
      <RunBar>
        <RunMode>
          <select aria-label="Run mode"><option>Automatic</option></select>
          <Down fill="#999" />
        </RunMode>
        <RunStatus>Run completed.</RunStatus>
        <Resize width="11" height="11" fill="#ddd">
          {[[9, 0], [6, 3], [9, 3], [3, 6], [6, 6], [9, 6], [0, 9], [3, 9], [6, 9], [9, 9]].map(([x, y]) => <rect key={`${x}-${y}`} x={x} y={y} width="2" height="2" />)}
        </Resize>
      </RunBar>
    </Dyn>
  );
}

export default function App() {
  return (
    <Desktop>
      <GlobalStyle />
      <Windows>
        <CivilWindow />
        <DynamoWindow />
      </Windows>
      <Taskbar>
        <StartButton aria-label="Start"><svg width="16" height="16"><path d="M0 2l7-1v6.500H0zM8 1l8-1v7.500H8zM0 8.500h7V15l-7-1zM8 8.500h8V16l-8-1z" fill="#fff" /></svg></StartButton>
        <Search>
          <svg width="16" height="16"><circle cx="10" cy="6" r="5.300" fill="none" stroke="#eee" strokeWidth="1.300" /><path d="M6 10l-6 6" stroke="#eee" strokeWidth="1.300" /></svg>
          <input aria-label="Search" placeholder="Type here to search" />
        </Search>
        {tasks.map((t) => <Task key={t.name} aria-label={t.name} $open={t.open} $active={t.active}>{t.icon}</Task>)}
        <Tray>
          <TrayButton aria-label="Hidden icons"><svg width="16" height="16"><path d="M2 11l6-6 6 6" stroke="#fff" strokeWidth="1.400" fill="none" /></svg></TrayButton>
          <TrayButton aria-label="PDF tool"><svg width="16" height="16"><path d="M0 0h16v16H0z" fill="#e51f1f" /><circle cx="8.500" cy="7.500" r="4.500" fill="none" stroke="#f5e9e0" strokeWidth="1.500" /><circle cx="8.500" cy="7.500" r="2" fill="#f5e9e0" /><path d="M4.500 7v8" stroke="#f5e9e0" strokeWidth="1.500" /></svg></TrayButton>
          <TrayButton aria-label="OneDrive"><svg width="16" height="16"><path d="M3 12c-4 0-4-5 0-5 1-5 8-5 9-1 3 0 4 2 4 4l-5 2z" fill="#1b7fe0" /><circle cx="11.500" cy="11" r="4.500" fill="#dceafa" /><path d="M9 11a2.500 2.500 0 014.500-1.500M14 11.500a2.500 2.500 0 01-4.500 1" stroke="#1b5fb0" strokeWidth="1.200" fill="none" /></svg></TrayButton>
          <TrayButton aria-label="Network"><svg width="16" height="16" fill="none" stroke="#fff"><path d="M3.500 5.500v6h12v-9h-9M8 14.500h6M9.500 12v2M.5 1.500h5v3h-5zM3 5v4" /></svg></TrayButton>
          <TrayButton aria-label="Volume"><svg width="16" height="16" fill="none" stroke="#fff"><path d="M.5 5.500h2l4-4v13l-4-4h-2zM8.500 5.500c1.500 1 1.500 4 0 5M10.500 3.500c3 2 3 7 0 9" /><path d="M13 1.500c4 3 4 10 0 13" stroke="#777" /></svg></TrayButton>
          <Clock>1:14 PM<br />12/1/2020</Clock>
          <TrayButton aria-label="Action center"><svg width="16" height="16"><path d="M0 0h16v13H8l-4 3v-3H0z" fill="#fff" /><path d="M3 4h10M3 7h10M3 10h5" stroke="#222" /><circle cx="12.500" cy="12.500" r="3.500" fill="#ddd" stroke="#1d1d1d" /></svg></TrayButton>
        </Tray>
      </Taskbar>
    </Desktop>
  );
}
